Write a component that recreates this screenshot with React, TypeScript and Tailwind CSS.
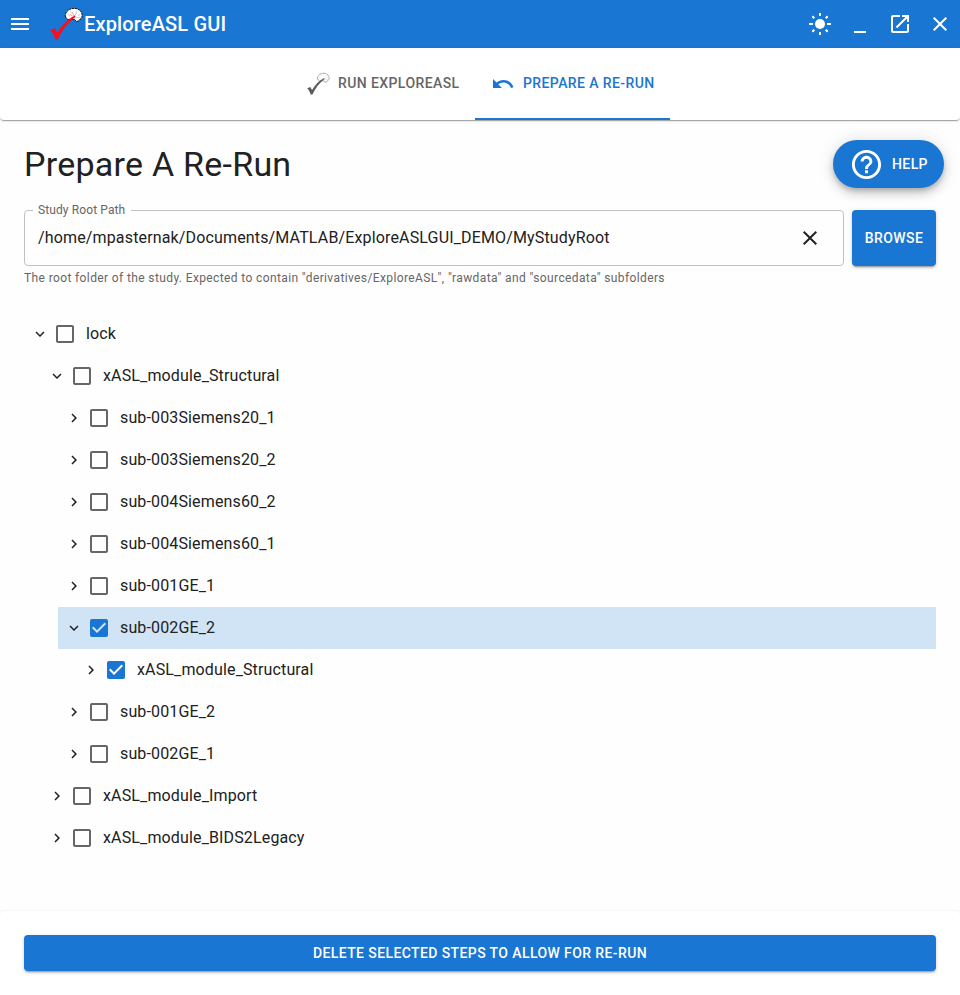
import React from "react";

const ICONS = {
  menu: "M3 18h18v-2H3v2zm0-5h18v-2H3v2zm0-7v2h18V6H3z",
  minimize: "M6 19h12v2H6z",
  launch: "M19 19H5V5h7V3H5c-1.11 0-2 .9-2 2v14c0 1.1.89 2 2 2h14c1.1 0 2-.9 2-2v-7h-2v7zM14 3v2h3.59l-9.83 9.83 1.41 1.41L19 6.41V10h2V3h-7z",
  close: "M19 6.41 17.59 5 12 10.59 6.41 5 5 6.41 10.59 12 5 17.59 6.41 19 12 13.41 17.59 19 19 17.59 13.41 12z",
  undo: "M12.5 8c-2.65 0-5.05.99-6.9 2.6L2 7v9h9l-3.62-3.62c1.39-1.16 3.16-1.88 5.12-1.88 3.54 0 6.55 2.31 7.6 5.5l2.37-.78C21.08 11.03 17.15 8 12.5 8z",
  help: "M11 18h2v-2h-2v2zm1-16C6.48 2 2 6.48 2 12s4.48 10 10 10 10-4.48 10-10S17.52 2 12 2zm0 18c-4.41 0-8-3.59-8-8s3.59-8 8-8 8 3.59 8 8-3.59 8-8 8zm0-14c-2.21 0-4 1.79-4 4h2c0-1.1.9-2 2-2s2 .9 2 2c0 2-3 1.75-3 5h2c0-2.25 3-2.5 3-5 0-2.21-1.79-4-4-4z",
  expand: "M16.59 8.59 12 13.17 7.41 8.59 6 10l6 6 6-6z",
  right: "M10 6 8.59 7.41 13.17 12l-4.58 4.59L10 18l6-6z",
  box: "M19 5v14H5V5h14m0-2H5c-1.1 0-2 .9-2 2v14c0 1.1.9 2 2 2h14c1.1 0 2-.9 2-2V5c0-1.1-.9-2-2-2z",
  checked: "M19 3H5c-1.11 0-2 .9-2 2v14c0 1.1.89 2 2 2h14c1.11 0 2-.9 2-2V5c0-1.1-.89-2-2-2zm-9 14-5-5 1.41-1.41L10 14.17l7.59-7.59L19 8l-9 9z",
};

function Icon({ name, className = "size-6" }: { name: keyof typeof ICONS; className?: string }) {
  return (
    <svg viewBox="0 0 24 24" fill="currentColor" className={`shrink-0 ${className}`}>
      <path d={ICONS[name]} />
    </svg>
  );
}

function SunIcon() {
  return (
    <svg viewBox="0 0 24 24" className="size-6 shrink-0">
      <circle cx="12" cy="12" r="5" fill="currentColor" />
      <path
        d="M1 12h4M19 12h4M12 1v3M12 20v3M4.3 4.3l2 2M17.7 17.7l2 2M19.7 4.3l-2 2M6.3 17.7l-2 2"
        fill="none"
        stroke="currentColor"
        strokeWidth="2"
      />
    </svg>
  );
}

function Logo({ mono = false, className }: { mono?: boolean; className: string }) {
  return (
    <svg viewBox="0 0 32 32" className={`shrink-0 overflow-visible ${className}`}>
      <path
        d="M15.6 9C14.6 7 15.900 3.500 19.400 1.500 23-.4 28 0 30.500 3c1.700 2 2 4.500 1.300 6.500-.4 1-1.200 1.400-1.700 1.600-.4 1.600-2.200 2.600-4.300 2.100l-1.300-2.100c-1.500.5-3 .3-4 .5-1.800.5-4.100-.4-4.900-2.600z"
        fill={mono ? "none" : "#fff"}
        stroke={mono ? "#777" : "#161616"}
        strokeWidth={mono ? 1.1 : 1}
        strokeDasharray={mono ? "1.6 .5" : "2.4 .5"}
      />
      <path
        d="M17.500 6.500l2 1M20.500 2.800l1 2M27 2.800l-1 2M30 6.500l-2 1M25.500 10l4.500-.5"
        fill="none"
        stroke={mono ? "#bbb" : "#aaa"}
        strokeWidth=".6"
      />
      {!mono && <path d="m22.500 4 1 4M20 6.500l2.300 1.500M26.500 5l-2 3" stroke="#f5838a" strokeWidth=".7" />}
      <path
        d="M.3 22.300 4.800 20.200l2.500 4.600C11.500 17.800 17.500 11 24.800 7.400l.8 1.400C18 14.800 12.200 21.800 8 31.300H5.300C4.200 27.700 2.600 24.400.3 22.300z"
        fill={mono ? "#5c5c5c" : "#fc0d1b"}
      />
    </svg>
  );
}

type Row = { label: string; depth: number; open?: boolean; checked?: boolean; selected?: boolean };

const ROWS: Row[] = [
  { label: "lock", depth: 0, open: true },
  { label: "xASL_module_Structural", depth: 1, open: true },
  { label: "sub-003Siemens20_1", depth: 2 },
  { label: "sub-003Siemens20_2", depth: 2 },
  { label: "sub-004Siemens60_2", depth: 2 },
  { label: "sub-004Siemens60_1", depth: 2 },
  { label: "sub-001GE_1", depth: 2 },
  { label: "sub-002GE_2", depth: 2, open: true, checked: true, selected: true },
  { label: "xASL_module_Structural", depth: 3, checked: true },
  { label: "sub-001GE_2", depth: 2 },
  { label: "sub-002GE_1", depth: 2 },
  { label: "xASL_module_Import", depth: 1 },
  { label: "xASL_module_BIDS2Legacy", depth: 1 },
];

const INDENT = ["ml-0", "ml-[17px]", "ml-[34px]", "ml-[51px]"];

function TreeRow({ row }: { row: Row }) {
  return (
    <li className={`flex h-[42px] items-center ${INDENT[row.depth]} ${row.selected ? "bg-[#d1e4f6]" : ""}`}>
      <Icon name={row.open ? "expand" : "right"} className="ml-[7px] size-[18px]" />
      <span className={`ml-1 ${row.checked ? "text-[#1976d2]" : "text-[#666]"}`}>
        <Icon name={row.checked ? "checked" : "box"} />
      </span>
      <span className="ml-[9px] text-base leading-6 tracking-[0.14px]">{row.label}</span>
    </li>
  );
}

const BUTTON_SHADOW =
  "shadow-[0_3px_1px_-2px_rgba(0,0,0,0.2),0_2px_2px_0_rgba(0,0,0,0.14),0_1px_5px_0_rgba(0,0,0,0.12)]";

export default function App() {
  return (
    <div className="flex h-[995px] w-[960px] flex-col overflow-hidden bg-[#fefefe] font-[Roboto,sans-serif] text-[#212121]">
      <header className="flex h-12 shrink-0 items-center bg-[#1976d2] pl-2 text-white">
        <Icon name="menu" />
        <Logo className="ml-[18px] size-8" />
        <h1 className="ml-0.5 text-xl font-medium leading-8 tracking-[0.15px]">ExploreASL GUI</h1>
        <div className="ml-auto flex items-center gap-4 pr-2">
          <SunIcon />
          <Icon name="minimize" />
          <Icon name="launch" />
          <Icon name="close" />
        </div>
      </header>

      <nav className="z-10 flex h-[72px] shrink-0 justify-center rounded-b bg-white text-sm font-medium tracking-[0.4px] shadow-[0_2px_1px_-1px_rgba(0,0,0,0.2),0_1px_1px_0_rgba(0,0,0,0.14),0_1px_3px_0_rgba(0,0,0,0.12)]">
        <button className="flex w-[185px] items-center pl-[17px] text-[#666]">
          <Logo mono className="size-[22px]" />
          <span className="ml-[9px] whitespace-nowrap pb-0.5">RUN EXPLOREASL</span>
        </button>
        <button className="flex w-[195px] items-center border-b-2 border-[#1976d2] pl-4 pt-0.5 text-[#1976d2]">
          <Icon name="undo" />
          <span className="ml-2 whitespace-nowrap pb-0.5">PREPARE A RE-RUN</span>
        </button>
      </nav>

      <main className="flex-1 px-6 pt-5">
        <div className="flex h-12 items-center justify-between">
          <h2 className="text-[34px] leading-[42px] tracking-[0.25px]">Prepare A Re-Run</h2>
          <button className="-mr-2 flex h-12 w-[111px] items-center rounded-full bg-[#1976d2] pl-4 text-sm font-medium tracking-[0.4px] text-white shadow-[0_3px_5px_-1px_rgba(0,0,0,0.2),0_6px_10px_0_rgba(0,0,0,0.14),0_1px_18px_0_rgba(0,0,0,0.12)]">
            <Icon name="help" className="size-[35px]" />
            <span className="ml-2">HELP</span>
          </button>
        </div>

        <div className="mt-[22px] flex gap-2">
          <fieldset className="-mt-2 h-16 w-[820px] rounded border border-[#c1c1c1] px-2">
            <legend className="h-4 pl-[5px] pr-1.5 text-xs leading-4 tracking-[0.11px] text-[#666]">
              Study Root Path
            </legend>
            <div className="flex h-10 items-center justify-between pl-[5px] pr-[13px]">
              <span className="pb-px text-base leading-6 tracking-[0.15px]">
                /home/mpasternak/Documents/MATLAB/ExploreASLGUI_DEMO/MyStudyRoot
              </span>
              <Icon name="close" />
            </div>
          </fieldset>
          <button
            className={`h-14 w-[84px] rounded bg-[#1976d2] text-sm font-medium tracking-[0.4px] text-white ${BUTTON_SHADOW}`}
          >
            BROWSE
          </button>
        </div>
        <p className="mt-0.5 text-xs leading-5 tracking-[0.38px] text-[#666]">
          The root folder of the study. Expected to contain "derivatives/ExploreASL", "rawdata" and "sourcedata" subfolders
        </p>

        <ul className="mt-[25px]">
          {ROWS.map((row, i) => (
            <TreeRow key={i} row={row} />
          ))}
        </ul>
      </main>

      <footer className="h-[84px] shrink-0 rounded-t bg-white px-6 pt-6 shadow-[0_0_2px_rgba(0,0,0,0.1)]">
        <button
          className={`h-9 w-full rounded bg-[#1976d2] text-sm font-medium tracking-[0.4px] text-white ${BUTTON_SHADOW}`}
        >
          DELETE SELECTED STEPS TO ALLOW FOR RE-RUN
        </button>
      </footer>
    </div>
  );
}
